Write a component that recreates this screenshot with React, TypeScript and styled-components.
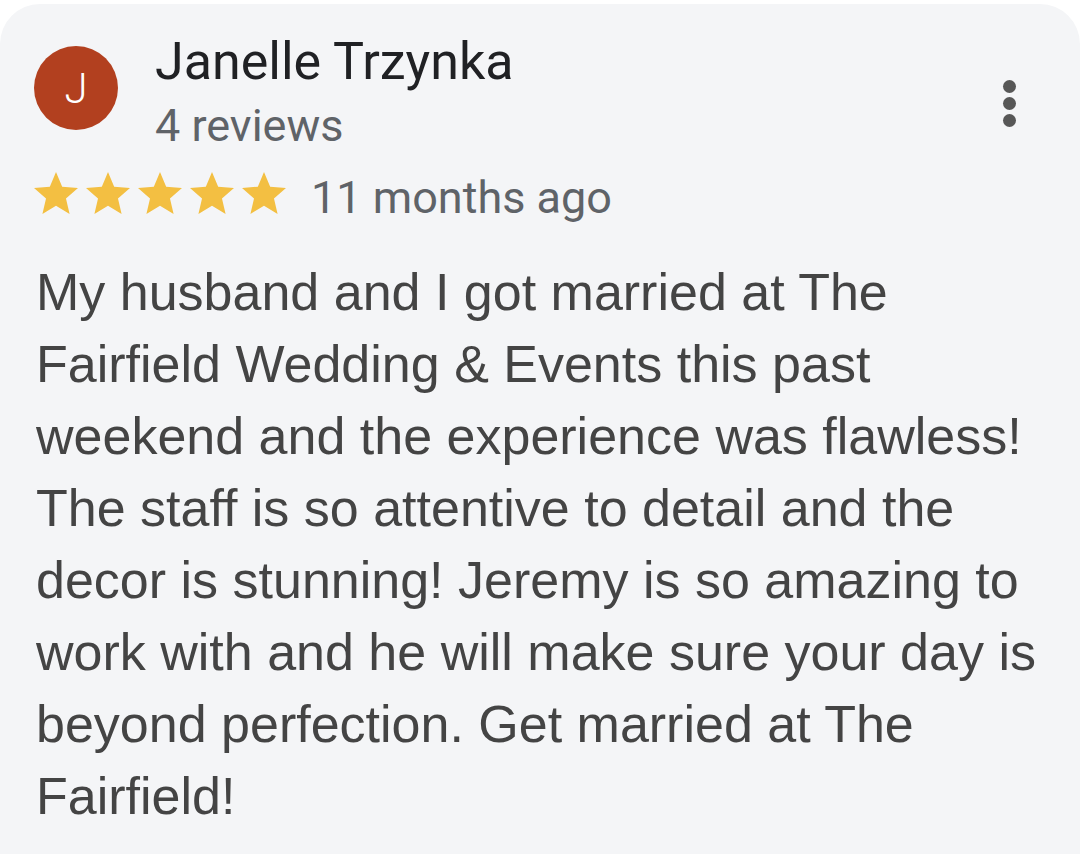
import styled, { createGlobalStyle } from "styled-components";

const GlobalStyle = createGlobalStyle`
  html, body {
    margin: 0;
    padding: 0;
    background: #ffffff;
  }
  body {
    font-family: "Liberation Sans", Arial, sans-serif;
  }
`;

const Card = styled.div`
  margin-top: 4px;
  width: 1080px;
  min-height: 860px;
  background: #f4f5f7;
  border-radius: 40px 40px 0 0;
  box-sizing: border-box;
  padding: 30px 30px 0 36px;
  overflow: hidden;
`;

const Header = styled.div`
  display: flex;
  align-items: flex-start;
`;

const Avatar = styled.div`
  width: 84px;
  height: 84px;
  border-radius: 50%;
  background: #b2401f;
  color: #ffffff;
  display: flex;
  align-items: center;
  justify-content: center;
  font-family: Roboto, "Liberation Sans", sans-serif;
  font-weight: 300;
  font-size: 42px;
  margin-top: 12px;
  margin-left: -2px;
  flex-shrink: 0;
`;

const Who = styled.div`
  margin-left: 37px;
  display: flex;
  flex-direction: column;
  flex: 1;
`;

const Name = styled.div`
  font-family: Roboto, "Liberation Sans", sans-serif;
  font-size: 52px;
  line-height: 56px;
  color: #202124;
`;

const Reviews = styled.div`
  font-family: Roboto, "Liberation Sans", sans-serif;
  font-size: 45px;
  line-height: 50px;
  color: #5f6368;
  margin-top: 11px;
`;

const Menu = styled.div`
  display: flex;
  flex-direction: column;
  gap: 4px;
  margin-top: 46px;
  margin-right: 34px;
`;

const Dot = styled.span`
  width: 13px;
  height: 13px;
  border-radius: 50%;
  background: #575757;
`;

const RatingRow = styled.div`
  display: flex;
  align-items: flex-start;
  margin-top: 21px;
`;

const Stars = styled.div`
  display: flex;
  gap: 8px;
  margin-left: -2px;
`;

const When = styled.span`
  font-family: Roboto, "Liberation Sans", sans-serif;
  font-size: 45px;
  line-height: 50px;
  color: #5f6368;
  margin-left: 25px;
  margin-top: 1px;
`;

const Body = styled.p`
  margin: 33px 0 0 0;
  font-family: "Liberation Sans", Arial, sans-serif;
  font-size: 52px;
  line-height: 72px;
  color: #444444;
`;

const Star = () => (
  <svg width="44" height="42" viewBox="2 2 20 19">
    <path
      fill="#f3bf42"
      d="M12 17.27L18.18 21l-1.64-7.03L22 9.24l-7.19-.61L12 2 9.19 8.63 2 9.24l5.46 4.73L5.82 21z"
    />
  </svg>
);

export default function App() {
  return (
    <>
      <GlobalStyle />
      <Card>
        <Header>
          <Avatar>J</Avatar>
          <Who>
            <Name>Janelle Trzynka</Name>
            <Reviews>4 reviews</Reviews>
          </Who>
          <Menu>
            <Dot />
            <Dot />
            <Dot />
          </Menu>
        </Header>
        <RatingRow>
          <Stars>
            {[0, 1, 2, 3, 4].map((i) => (
              <Star key={i} />
            ))}
          </Stars>
          <When>11 months ago</When>
        </RatingRow>
        <Body>
          My husband and I got married at The Fairfield Wedding &amp; Events
          this past weekend and the experience was flawless! The staff is so
          attentive to detail and the decor is stunning! Jeremy is so amazing
          to work with and he will make sure your day is beyond perfection. Get
          married at The Fairfield!
        </Body>
      </Card>
    </>
  );
}
